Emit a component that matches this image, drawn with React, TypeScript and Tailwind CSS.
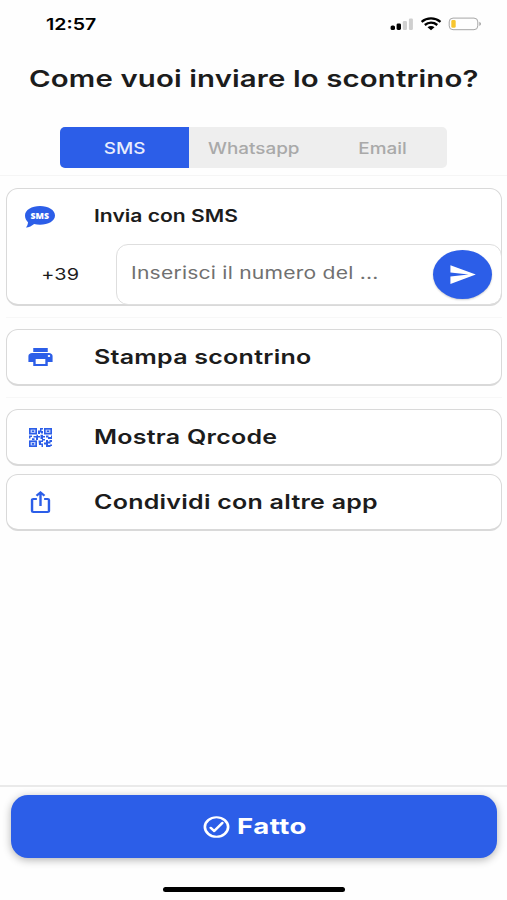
import { useState, type ReactNode } from 'react';
import { MdIosShare, MdPrint, MdSend } from 'react-icons/md';
import { IoCheckmarkCircleOutline } from 'react-icons/io5';

const TABS = ['SMS', 'Whatsapp', 'Email'];

const StatusIcons = () => (
  <svg className="w-[92px] h-4" viewBox="0 0 92 16">
    {/* Signal */}
    <rect x=".6" y="9.5" width="4.4" height="4.5" rx="1.6" />
    <rect x="6.6" y="7.4" width="4.4" height="6.6" rx="1.4" />
    <rect x="12.8" y="5" width="4.2" height="9" rx="1.2" fill="#cfcfcf" />
    <rect x="18.9" y="2.6" width="4" height="11.4" rx="1.2" fill="#cfcfcf" />
    {/* Wifi */}
    <g fill="none" stroke="#000" strokeWidth="2.3">
      <path d="M31.6 5.8C37 1.3 45 1.3 50.5 5.8" />
      <path d="M34.8 9C38.5 6 43.5 6 47.3 9" />
    </g>
    <path d="M37.5 11.2C39.5 9.6 42.5 9.6 44.5 11.2L41 14.2Z" />
    {/* Battery */}
    <rect x="59.2" y="2.1" width="28.6" height="11.6" rx="3.8" fill="none" stroke="#a6a6a6" strokeWidth="1" />
    <rect x="61.3" y="4" width="4.4" height="7.8" rx="1.4" fill="#f7c52e" />
    <path d="M89.3 5.8C91.5 6.6 91.5 9.2 89.3 10Z" fill="#a6a6a6" />
  </svg>
);

const SmsIcon = () => (
  <svg className="w-[30px] h-[22px]" viewBox="0 0 30 22">
    <path
      d="M15 0C23.3 0 30 4.1 30 9.4S23.3 18.700 15 18.700c-2.100 0-4.100-.3-5.900-.8C6.800 19.800 4.200 21.300 .8 21.600c1.400-1.400 2.100-3.400 2.200-5.400C1.200 14.400 0 12 0 9.400 0 4.100 6.700 0 15 0Z"
      fill="#2c5ee8"
    />
    <text
      x="14.8"
      y="12.8"
      textAnchor="middle"
      textLength="18.5"
      lengthAdjust="spacingAndGlyphs"
      className="font-['Open_Sans',sans-serif] text-[9.5px] font-extrabold fill-white"
    >
      SMS
    </text>
  </svg>
);

const QrIcon = () => (
  <svg className="w-[23px] h-[19px]" viewBox="0 0 23 19" preserveAspectRatio="none">
    <g fill="#2c5ee8" fillOpacity=".3" stroke="#2c5ee8" strokeWidth="1.6">
      <rect x=".8" y=".8" width="6.4" height="4.9" />
      <rect x="15.8" y=".8" width="6.4" height="4.9" />
      <rect x=".8" y="13.2" width="6.4" height="5" />
    </g>
    <path
      d="M3 2.400h2v1.700H3zM18 2.400h2v1.700h-2zM3 15h2v1.700H3zM9 2.500h2V0h3v1.500h-1.500V3H14v2.500h-2V4.500h-1V6H9zM0 7.500h3V9H1.500v1.500H0zM4.500 8h3V6.800H9V8h2v1.500H9V12H7V9.500H4.500zM11.500 6.800H14V8h2v1.500h-2V11h-2.500zM17 7.500h2.500V9H22V7.500h1V11h-4V9.500h-2zM9.500 12.500H13V11h3v1.500h-2V14h-2v1.500h2V19h-1.500v-2H10zM15 14.500h2V12h2v1.500h1.500V12H23v2h-1.500v1.500H19V17h2.500v2H17v-2.500h-2zM21 16.500h2V18h-2zM3 10.300h2.500V12H3z"
      fill="#2c5ee8"
    />
  </svg>
);

interface ActionRowProps {
  icon: ReactNode;
  label: string;
}

const ActionRow = ({ icon, label }: ActionRowProps) => (
  <button className="flex w-full h-[57px] items-center rounded-xl border border-b-2 border-[#d9d9d9] bg-white text-left">
    <span className="flex w-[66px] justify-center">{icon}</span>
    <span className="ml-[21px] origin-left scale-x-[1.25] whitespace-nowrap text-[20px] font-semibold tracking-[0.2px]">
      {label}
    </span>
  </button>
);

export default function App() {
  const [activeTab, setActiveTab] = useState('SMS');

  return (
    <div className="flex h-[900px] w-[507px] flex-col overflow-hidden bg-[#fefefe] font-['Inter',sans-serif] text-[#1c1c1c]">
      {/* Status bar */}
      <div className="flex h-[47px] shrink-0 items-center justify-between pl-[46px] pr-[25px] text-black">
        <span className="origin-left scale-x-[1.22] pt-px text-[16px] font-semibold">12:57</span>
        <StatusIcons />
      </div>

      <h1 className="flex h-[64px] shrink-0 items-center justify-center whitespace-nowrap text-[23.5px] font-semibold tracking-[0.1px]">
        <span className="scale-x-[1.25]">Come vuoi inviare lo scontrino?</span>
      </h1>

      {/* Channel tabs */}
      <div className="mx-[60px] mt-4 grid h-[41px] shrink-0 grid-cols-3 overflow-hidden rounded-[5px] bg-[#eeeeee]">
        {TABS.map((tab) => (
          <button
            key={tab}
            onClick={() => setActiveTab(tab)}
            className={`flex items-center justify-center text-[16px] font-medium ${
              activeTab === tab ? 'bg-[#2c5ee8] text-[#e8edfd]' : 'text-[#a9a9a9]'
            }`}
          >
            <span className="scale-x-[1.18]">{tab}</span>
          </button>
        ))}
      </div>

      <div className="mt-[7px] h-px shrink-0 bg-[#f5f5f5]" />

      <main className="flex flex-1 flex-col pl-[6px] pr-[5px] pt-3">
        <section className="flex h-[118px] flex-col rounded-xl border border-b-2 border-[#d9d9d9] bg-white">
          <div className="flex h-[55px] items-center">
            <span className="flex w-[66px] justify-center">
              <SmsIcon />
            </span>
            <h2 className="ml-[21px] origin-left scale-x-[1.24] whitespace-nowrap text-[17px] font-semibold">
              Invia con SMS
            </h2>
          </div>
          <div className="flex flex-1">
            <div className="flex w-[109px] items-center justify-center pr-[2px] text-[16px] tracking-[0.1px]">
              <span className="scale-x-[1.24]">+39</span>
            </div>
            <div className="-mb-px -mr-px flex flex-1 items-center justify-between rounded-xl border border-[#dedede] pl-[14px] pr-[9px]">
              <span className="origin-left scale-x-[1.24] whitespace-nowrap pb-px text-[17px] tracking-[0.18px] text-[#707070]">
                Inserisci il numero del ...
              </span>
              <button
                aria-label="Invia"
                className="flex h-[49px] w-[59px] items-center justify-center rounded-[50%] bg-[#2c5ee8] text-white shadow-[0_1px_2px_rgba(0,0,0,0.2)]"
              >
                <MdSend preserveAspectRatio="none" className="h-[25px] w-[29px]" />
              </button>
            </div>
          </div>
        </section>

        <div className="mt-[11px] mb-[11px] h-px bg-[#f7f7f7]" />
        <ActionRow
          label="Stampa scontrino"
          icon={<MdPrint preserveAspectRatio="none" className="h-6 w-[29px] text-[#2c5ee8]" />}
        />
        <div className="mt-[11px] mb-[11px] h-px bg-[#f7f7f7]" />
        <div className="flex flex-col gap-2">
          <ActionRow label="Mostra Qrcode" icon={<QrIcon />} />
          <ActionRow
            label="Condividi con altre app"
            icon={<MdIosShare preserveAspectRatio="none" className="h-6 w-[29px] text-[#2c5ee8]" />}
          />
        </div>
      </main>

      {/* Footer */}
      <footer className="flex h-[115px] shrink-0 flex-col items-center border-t-2 border-[#eaeaea] pl-[11px] pr-[10px] pt-2">
        <button className="flex h-[63px] w-full items-center justify-center rounded-[17px] bg-[#2c5ee8] pr-[15px] text-white shadow-[0_2px_9px_rgba(0,0,0,0.3)]">
          <IoCheckmarkCircleOutline
            preserveAspectRatio="none"
            className="h-[26px] w-[31px] [&_path]:[stroke-width:44px]"
          />
          <span className="ml-[5px] origin-left scale-x-[1.25] text-[22px] font-bold tracking-[0.4px]">Fatto</span>
        </button>
        <div className="mt-[29px] h-[5px] w-[182px] rounded-full bg-black" />
      </footer>
    </div>
  );
}
